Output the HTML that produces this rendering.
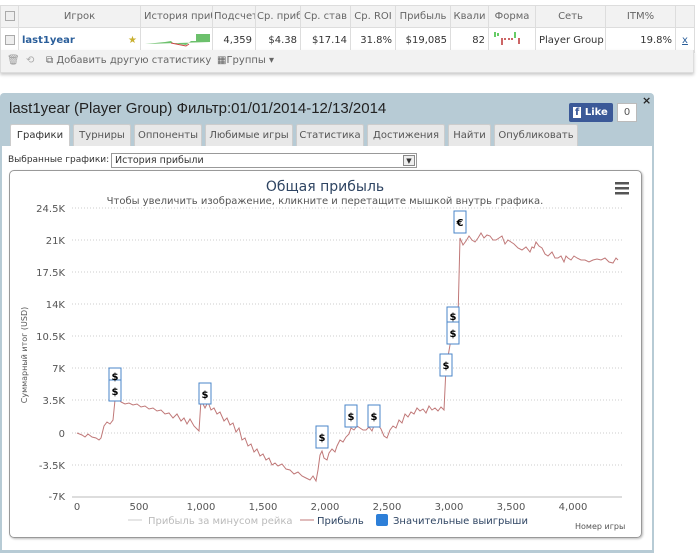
<!DOCTYPE html>
<html><head><meta charset="utf-8"><style>
*{box-sizing:border-box;margin:0;padding:0}
body{width:700px;height:550px;background:#fff;font-family:"DejaVu Sans","Liberation Sans",sans-serif;font-size:10px;color:#333;position:relative;overflow:hidden}
.abs{position:absolute}
table{border-collapse:collapse;position:absolute;left:0;top:5px;width:694px;table-layout:fixed}
td{border:1px solid #ddd;height:22px;white-space:nowrap;overflow:hidden;font-size:10px;padding:0 3px}
tr.h td{background:#f2f2f2;color:#666;text-align:center}
tr.r td{text-align:right;color:#333}
.cb{display:inline-block;width:10px;height:10px;border:1px solid #aaa;background:#eee;vertical-align:middle}
.tb{position:absolute;left:0;top:50px;width:694px;height:23px;background:#f2f2f2;border:1px solid #ddd;border-top:none;color:#666;box-shadow:0 2px 3px #ccc}
.dlg{position:absolute;left:0;top:93px;width:654px;height:460px;background:#b7cbd5;border-radius:4px 4px 0 0}
.tab{position:absolute;top:124px;height:22px;background:#e8e8e8;border:1px solid #ccc;border-bottom:none;font-size:10px;color:#555;text-align:center;line-height:21px;border-radius:2px 2px 0 0}
</style></head><body>
<table>
<colgroup><col style="width:18px"><col style="width:122px"><col style="width:72px"><col style="width:43px"><col style="width:45px"><col style="width:50px"><col style="width:45px"><col style="width:55px"><col style="width:38px"><col style="width:47px"><col style="width:70px"><col style="width:70px"><col style="width:19px"></colgroup>
<tr class="h"><td><span class="cb"></span></td><td>Игрок</td><td style="text-align:left">История приб</td><td style="padding:0 1px">Подсчет</td><td style="padding:0 1px">Ср. приб</td><td style="padding:0 1px">Ср. став</td><td>Ср. ROI</td><td>Прибыль</td><td style="padding:0 1px">Квали</td><td>Форма</td><td>Сеть</td><td>ITM%</td><td></td></tr>
<tr class="r"><td><span class="cb"></span></td><td style="text-align:left;color:#2a5e9a;font-weight:bold">last1year<span style="float:right;color:#c9b030">★</span></td><td style="padding:0"><svg width="72" height="21"><path d="M4 16 L24 14 L30 13 L32 15 L45 17 L50 13 L55 13 L55 6 L69 6 L69 14 Z" fill="#6cc06c"/><path d="M30 15 L45 18 L48 16" stroke="#c44" fill="none"/></svg></td><td>4,359</td><td>$4.38</td><td>$17.14</td><td>31.8%</td><td>$19,085</td><td>82</td><td style="padding:0"><svg width="47" height="21"><rect x="5" y="4" width="2" height="5" fill="#6c6"/><rect x="8" y="5" width="2" height="3" fill="#6c6"/><rect x="12" y="10" width="2" height="7" fill="#c66"/><rect x="15" y="10" width="2" height="2" fill="#c66"/><rect x="19" y="10" width="2" height="2" fill="#c66"/><rect x="22" y="10" width="2" height="2" fill="#c66"/><rect x="25" y="4" width="2" height="6" fill="#6c6"/><rect x="29" y="10" width="2" height="6" fill="#c66"/></svg></td><td style="text-align:center">Player Group</td><td>19.8%</td><td style="color:#2a5e9a;text-decoration:underline;text-align:center;padding:0">x</td></tr>
</table>
<div class="tb"><span class="abs" style="left:6px;top:5px;color:#999">🗑</span><span class="abs" style="left:25px;top:5px;color:#aaa">⟲</span><span class="abs" style="left:45px;top:5px">⧉ Добавить другую статистику</span><span class="abs" style="left:216px;top:5px">▦Группы ▾</span></div>

<div class="dlg"></div>
<div class="abs" style="left:9px;top:100px;font-size:15px;color:#222;font-family:'Liberation Sans',sans-serif">last1year (Player Group) Фильтр:01/01/2014-12/13/2014</div>
<div class="abs" style="left:569px;top:103px;width:44px;height:19px;background:#3b5998;border-radius:2px;color:#fff;font-weight:bold;font-size:10px;line-height:19px;padding-left:4px"><span style="background:#fff;color:#3b5998;padding:0 2px">f</span> Like</div>
<div class="abs" style="left:617px;top:103px;width:20px;height:19px;background:#fff;border:1px solid #bbb;text-align:center;line-height:17px;color:#555">0</div>
<div class="abs" style="left:642px;top:94px;font-size:11px;font-weight:bold;color:#222">×</div>
<div class="tab" style="left:10px;width:60px;background:#fff;height:23px;color:#333">Графики</div>
<div class="tab" style="left:73px;width:58px">Турниры</div>
<div class="tab" style="left:134px;width:68px">Оппоненты</div>
<div class="tab" style="left:205px;width:88px">Любимые игры</div>
<div class="tab" style="left:296px;width:68px">Статистика</div>
<div class="tab" style="left:367px;width:78px">Достижения</div>
<div class="tab" style="left:448px;width:43px">Найти</div>
<div class="tab" style="left:494px;width:84px">Опубликовать</div>
<div class="abs" style="left:2px;top:146px;width:650px;height:404px;background:#fff"></div>
<div class="abs" style="left:8px;top:155px;font-size:9px">Выбранные графики:</div>
<div class="abs" style="left:111px;top:153px;width:306px;height:15px;border:1px solid #999;padding-left:3px;line-height:13px;font-size:9.5px">История прибыли<span class="abs" style="right:1px;top:1px;width:12px;height:11px;border:1px solid #888;background:#eee;font-size:7px;text-align:center;line-height:10px">▼</span></div>
<div class="abs" style="left:9px;top:170px;width:633px;height:368px;border:1px solid #999;border-radius:5px;box-shadow:1px 1px 2px #bbb"></div>
<svg class="abs" style="left:0;top:0" width="700" height="550" font-family="DejaVu Sans, sans-serif">
<text x="325" y="191" font-size="14" fill="#2f4563" text-anchor="middle">Общая прибыль</text>
<text x="325" y="204" font-size="10" fill="#555" text-anchor="middle">Чтобы увеличить изображение, кликните и перетащите мышкой внутрь графика.</text>
<g fill="#555"><rect x="615" y="182" width="14" height="2.5"/><rect x="615" y="187" width="14" height="2.5"/><rect x="615" y="192" width="14" height="2.5"/></g>
<g stroke="#ccc" stroke-dasharray="1,2"><line x1="72" x2="622" y1="208" y2="208"/><line x1="72" x2="622" y1="240" y2="240"/><line x1="72" x2="622" y1="272" y2="272"/><line x1="72" x2="622" y1="304" y2="304"/><line x1="72" x2="622" y1="336" y2="336"/><line x1="72" x2="622" y1="368" y2="368"/><line x1="72" x2="622" y1="400" y2="400"/><line x1="72" x2="622" y1="433" y2="433"/><line x1="72" x2="622" y1="465" y2="465"/></g>
<line x1="72" x2="622" y1="497" y2="497" stroke="#bbb"/>
<g font-size="10" fill="#555" text-anchor="end"><text x="65" y="212">24.5K</text><text x="65" y="244">21K</text><text x="65" y="276">17.5K</text><text x="65" y="308">14K</text><text x="65" y="340">10.5K</text><text x="65" y="372">7K</text><text x="65" y="404">3.5K</text><text x="65" y="437">0</text><text x="65" y="469">-3.5K</text><text x="65" y="500">-7K</text></g>
<g font-size="10" fill="#555" text-anchor="middle"><text x="77" y="510">0</text><text x="139" y="510">500</text><text x="201" y="510">1,000</text><text x="263" y="510">1,500</text><text x="325" y="510">2,000</text><text x="387" y="510">2,500</text><text x="449" y="510">3,000</text><text x="511" y="510">3,500</text><text x="573" y="510">4,000</text></g>
<text transform="translate(27,355) rotate(-90)" font-size="8" fill="#555" text-anchor="middle">Суммарный итог (USD)</text>
<polyline fill="none" stroke="#c07878" stroke-width="1" points="77,433 82,435 85,437 88,434 92,437 96,438 99,440 101,438 104,426 107,422 110,424 113,420 115,400 118,398 121,402 125,404 129,403 133,405 137,404 141,407 145,406 149,409 153,408 157,411 161,410 165,414 169,413 173,418 177,414 181,421 184,418 187,424 190,419 194,426 197,429 199,431 201,400 203,404 205,408 208,402 211,410 214,408 217,414 220,412 224,421 227,418 230,425 233,423 236,432 239,428 242,440 245,438 248,446 251,444 254,452 257,449 260,456 263,454 266,460 269,458 272,465 275,463 278,466 282,464 286,469 290,470 294,474 298,472 302,476 306,478 310,480 313,476 316,481 318,470 320,455 322,451 324,458 327,460 329,453 332,449 335,452 337,446 340,440 343,442 346,437 349,434 351,428 354,430 357,426 360,428 363,430 366,430 369,427 372,431 375,423 378,425 381,429 384,436 387,438 390,430 393,426 396,428 399,420 402,423 405,414 408,417 411,412 414,414 417,408 420,411 423,409 426,413 429,406 432,410 435,408 438,411 441,407 444,410 446,368 450,345 454,318 458,318 460,238 463,245 466,241 469,236 472,240 475,242 478,238 481,233 484,238 487,235 490,236 493,240 496,240 499,238 502,236 505,244 508,240 511,242 514,244 518,248 522,250 526,247 530,252 532,247 534,248 536,242 539,246 542,248 545,254 548,256 552,252 555,258 558,258 561,256 564,262 566,256 568,258 571,260 574,256 577,258 581,260 585,260 589,262 593,260 597,259 601,260 605,258 609,262 613,263 616,258 618,260"/>
<g fill="#fff" stroke="#4a86c8" stroke-width="1"><rect x="109" y="368" width="12" height="16"/><rect x="109" y="380" width="12" height="21"/><rect x="199" y="383" width="12" height="21"/><rect x="316" y="426" width="12" height="22"/><rect x="345" y="405" width="12" height="22"/><rect x="368" y="405" width="12" height="22"/><rect x="440" y="354" width="12" height="22"/><rect x="447" y="307" width="12" height="18"/><rect x="447" y="322" width="12" height="22"/><rect x="454" y="211" width="12" height="22"/></g>
<g font-size="10" font-weight="bold" fill="#000" text-anchor="middle"><text x="115" y="380">$</text><text x="115" y="395">$</text><text x="205" y="398">$</text><text x="322" y="441">$</text><text x="351" y="420">$</text><text x="374" y="420">$</text><text x="446" y="369">$</text><text x="453" y="320">$</text><text x="453" y="337">$</text><text x="460" y="226">€</text></g>
<line x1="128" x2="142" y1="520" y2="520" stroke="#ccc"/><text x="148" y="524" font-size="10" fill="#bbb">Прибыль за минусом рейка</text>
<line x1="300" x2="314" y1="520" y2="520" stroke="#c07878"/><text x="317" y="524" font-size="10" fill="#2f4563">Прибыль</text>
<rect x="376" y="514" width="12" height="12" rx="2" fill="#2d7fd8"/><text x="393" y="524" font-size="10" fill="#2f4563">Значительные выигрыши</text>
<text x="575" y="529" font-size="8" fill="#555">Номер игры</text>
</svg>
</body></html>
